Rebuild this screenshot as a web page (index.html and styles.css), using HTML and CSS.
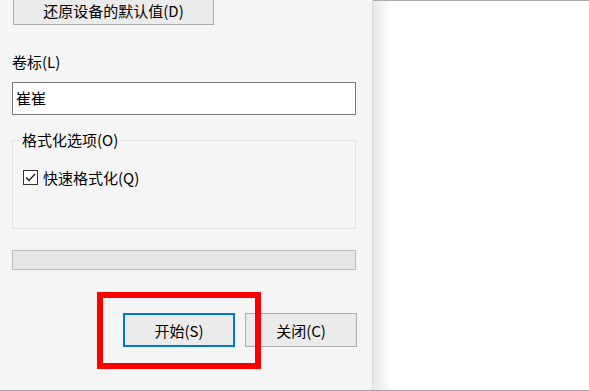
FILE: index.html
```html
<!DOCTYPE html>
<html lang="zh-CN">
<head>
<meta charset="utf-8">
<link rel="stylesheet" href="styles.css">
</head>
<body>
<div class="screen">
  <div class="panel">
    <button class="btn btn-restore">还原设备的默认值(D)</button>
    <div class="label">卷标(L)</div>
    <div class="input">崔崔</div>
    <div class="group">
      <div class="legend">格式化选项(O)</div>
      <div class="check-row">
        <span class="checkbox">
          <svg width="11" height="9" viewBox="0 0 11 9"><path d="M1 4.5 L4 7.5 L10 1" fill="none" stroke="#222" stroke-width="1.3"/></svg>
        </span>
        <span class="check-label">快速格式化(Q)</span>
      </div>
    </div>
    <div class="progress"></div>
    <div class="actions">
      <button class="btn btn-action btn-primary">开始(S)</button>
      <button class="btn btn-action">关闭(C)</button>
      <div class="highlight"></div>
    </div>
  </div>
  <div class="blank">
    <div class="shadow"></div>
  </div>
</div>
</body>
</html>
```
FILE: styles.css
```css
* { box-sizing: border-box; }
html, body { margin: 0; padding: 0; background: #ffffff; }
body {
  font-family: "Noto Sans CJK SC", "Noto Sans", sans-serif;
  font-size: 15px;
  color: #000;
  overflow: hidden;
}
.screen {
  display: flex;
  width: 589px;
  height: 391px;
  border-bottom: 1px solid #a0a0a0;
  overflow: hidden;
}
.panel {
  width: 373px;
  flex: none;
  background: #f5f5f5;
  border-right: 1px solid #dadada;
  padding-left: 12px;
  display: flex;
  flex-direction: column;
  position: relative;
}
.blank {
  flex: 1;
  border-top: 1px solid #ababab;
  background: #fff;
  display: flex;
}
.shadow {
  width: 18px;
  background: linear-gradient(to right, #e6e6e6, #ffffff);
}
.btn {
  font-family: inherit;
  font-size: 15px;
  color: #000;
  background: #ebebeb;
  border: 1px solid #adadad;
  padding: 0;
  line-height: 1;
  display: flex;
  align-items: center;
  justify-content: center;
}
.btn-restore {
  margin-top: -5px;
  margin-left: 1px;
  width: 201px;
  height: 30px;
}
.label {
  margin-top: 27px;
  height: 19px;
  line-height: 19px;
}
.input {
  margin-top: 11px;
  width: 344px;
  height: 33px;
  background: #fff;
  border: 1px solid #7a7a7a;
  padding-left: 3px;
  line-height: 29px;
}
.group {
  margin-top: 25px;
  width: 344px;
  height: 89px;
  border: 1px solid #e3e3e3;
  position: relative;
  padding-left: 10px;
}
.legend {
  position: absolute;
  top: -11px;
  left: 7px;
  padding: 0 2px;
  background: #f5f5f5;
  line-height: 19px;
}
.check-row {
  margin-top: 27px;
  display: flex;
  align-items: center;
  gap: 5px;
}
.checkbox {
  width: 15px;
  height: 15px;
  border: 1px solid #333;
  background: #fff;
  display: flex;
  align-items: center;
  justify-content: center;
}
.check-label { line-height: 19px; }
.progress {
  margin-top: 21px;
  width: 344px;
  height: 20px;
  border: 1px solid #bcbcbc;
  background: #e6e6e6;
}
.actions {
  margin-top: 43px;
  margin-left: 111px;
  display: flex;
  gap: 10px;
  position: relative;
}
.btn-action {
  width: 112px;
  height: 34px;
}
.btn-primary {
  border: 2px solid #0078d7;
}
.highlight {
  position: absolute;
  left: -26px;
  top: -21px;
  width: 164px;
  height: 77px;
  border: 6px solid #ff0000;
}
```
